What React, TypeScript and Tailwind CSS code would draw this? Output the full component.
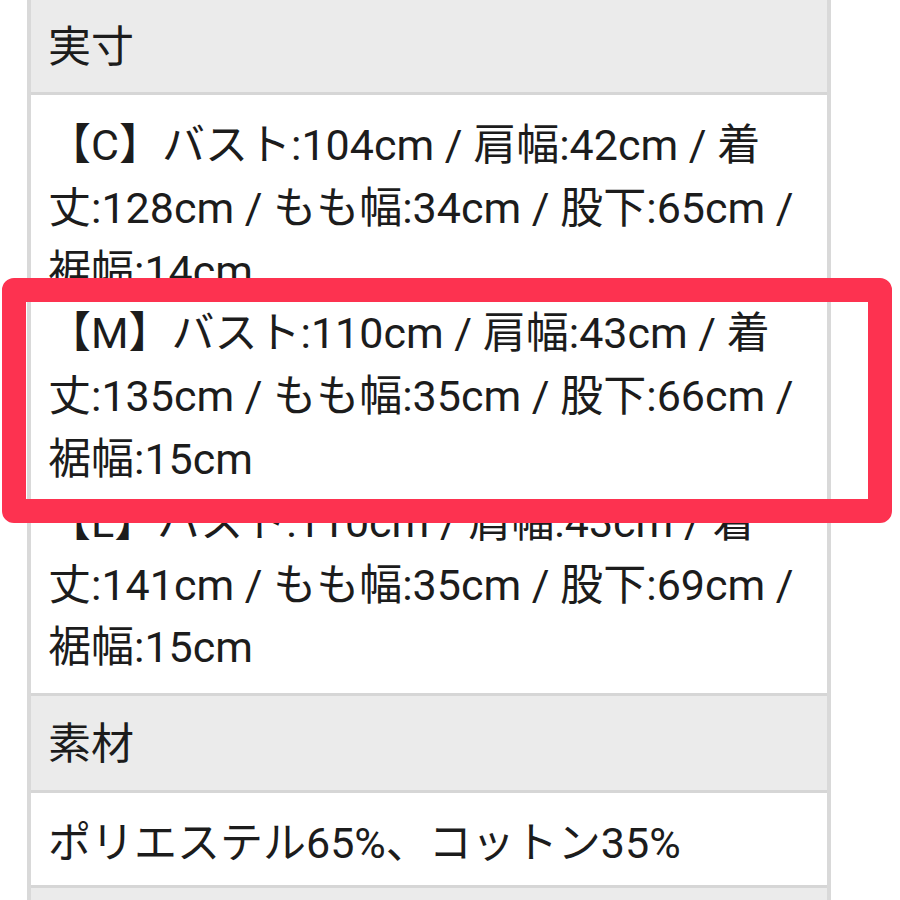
const cLines = ['【C】バスト:104cm / 肩幅:42cm / 着', '丈:128cm / もも幅:34cm / 股下:65cm /', '裾幅:14cm'];
const mLines = ['【M】バスト:110cm / 肩幅:43cm / 着', '丈:135cm / もも幅:35cm / 股下:66cm /', '裾幅:15cm'];
const lLines = ['【L】バスト:110cm / 肩幅:43cm / 着', '丈:141cm / もも幅:35cm / 股下:69cm /', '裾幅:15cm'];

function HeaderRow({ label, h }: { label: string; h: string }) {
  return (
    <div className={`flex items-center bg-[#ebebeb] pl-[17px] pt-[2px] ${h}`}>
      <span>{label}</span>
    </div>
  );
}

export default function App() {
  const sizeLines = [...cLines, ...mLines, ...lLines];

  return (
    <div
      className="relative w-[900px] h-[900px] overflow-hidden bg-white text-[#1c1c1c] text-[43px]"
      style={{ fontFamily: 'Roboto, "Noto Sans CJK JP", sans-serif' }}
    >
      {/* Spec table */}
      <div className="ml-[27px] w-[804px] border-x-4 border-[#d9d9d9]">
        <HeaderRow label="実寸" h="h-[92px]" />
        <div className="border-t-[3px] border-[#d6d6d6] h-[601px] px-[17px] pt-[19px] leading-[62.8px]">
          {sizeLines.map((line, i) => (
            <div key={i} className="whitespace-nowrap">
              {line}
            </div>
          ))}
        </div>
        <div className="border-t-[3px] border-[#d6d6d6]">
          <HeaderRow label="素材" h="h-[94px]" />
        </div>
        <div className="border-t-[3px] border-[#d6d6d6] h-[95px] flex items-center pl-[17px] pt-[8px]">
          ポリエステル65%、コットン35%
        </div>
        <div className="border-t-[3px] border-[#d6d6d6]">
          <HeaderRow label="" h="h-[40px]" />
        </div>
      </div>

      {/* Highlight frame */}
      <div className="absolute left-[2px] top-[278px] w-[890px] h-[245px] border-[24px] border-[#fd3250] rounded-[12px]" />
    </div>
  );
}
